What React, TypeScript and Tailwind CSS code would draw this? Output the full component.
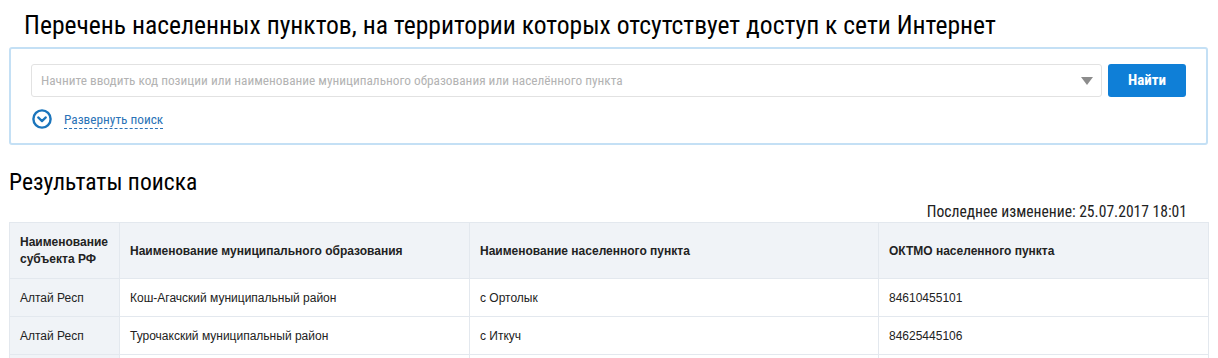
import React from "react";

const narrow = "font-['Roboto_Condensed','Liberation_Sans_Narrow','Arial_Narrow',sans-serif]";
const arial = "font-['Liberation_Sans',Arial,sans-serif]";

const rows = [
  ["Алтай Респ", "Кош-Агачский муниципальный район", "с Ортолык", "84610455101"],
  ["Алтай Респ", "Турочакский муниципальный район", "с Иткуч", "84625445106"],
  ["", "", "", ""],
];

function ExpandIcon() {
  return (
    <svg width="20" height="20" viewBox="0 0 20 20" fill="none">
      <circle cx="10" cy="10" r="8.6" stroke="#1b75bc" strokeWidth="2.4" />
      <path d="M6.2 8.4 10 12.1 13.8 8.4" stroke="#1b75bc" strokeWidth="2.2" strokeLinecap="round" strokeLinejoin="round" />
    </svg>
  );
}

export default function App() {
  return (
    <div className="w-[1218px] h-[358px] overflow-hidden bg-white px-[9px] pr-[10px]">
      <h1 className={`${narrow} pl-[15px] pt-[8px] text-[25.6px] leading-[34px] text-black`}>
        Перечень населенных пунктов, на территории которых отсутствует доступ к сети Интернет
      </h1>

      <section className="mt-[5px] rounded-[3px] border-2 border-[#c4e0f5] px-[20px] pt-[15px] pb-[14px]">
        <div className="flex gap-[6px]">
          <div className="flex h-[33px] flex-1 items-center rounded-[3px] border border-[#e2e2e2] bg-white pl-[9px] pr-[8px]">
            <span className={`${narrow} flex-1 text-[13.3px] text-[#b3b3b3]`}>
              Начните вводить код позиции или наименование муниципального образования или населённого пункта
            </span>
            <span className="h-0 w-0 border-x-[6px] border-t-[8px] border-x-transparent border-t-[#8c8c8c]" />
          </div>
          <button className={`${narrow} h-[33px] w-[78px] rounded-[3px] bg-[#0f7fd7] text-[15px] font-bold text-white`}>
            Найти
          </button>
        </div>
        <div className="mt-[12px] flex items-center gap-[12px] pl-[1px]">
          <ExpandIcon />
          <span className={`${narrow} border-b border-dashed border-[#2b73b7] pt-[2px] text-[13.3px] leading-[17px] text-[#2b73b7]`}>
            Развернуть поиск
          </span>
        </div>
      </section>

      <h2 className={`${narrow} mt-[22px] text-[23.6px] leading-[30px] text-black`}>Результаты поиска</h2>

      <div className={`${narrow} mt-[6px] pr-[21px] text-right text-[15.6px] leading-[19px] text-[#222]`}>
        Последнее изменение: 25.07.2017 18:01
      </div>

      <table className={`${arial} w-[1199px] table-fixed border-collapse text-[12px] text-[#222]`}>
        <colgroup>
          <col className="w-[110px]" />
          <col className="w-[350px]" />
          <col className="w-[409px]" />
          <col className="w-[330px]" />
        </colgroup>
        <thead>
          <tr className="h-[56px] bg-[#f0f3f7]">
            <th className="border border-[#e3e8ee] px-[10px] text-left font-bold leading-[17px]">
              Наименование субъекта РФ
            </th>
            <th className="border border-[#e3e8ee] px-[10px] text-left font-bold">Наименование муниципального образования</th>
            <th className="border border-[#e3e8ee] px-[10px] text-left font-bold">Наименование населенного пункта</th>
            <th className="border border-[#e3e8ee] px-[10px] text-left font-bold">ОКТМО населенного пункта</th>
          </tr>
        </thead>
        <tbody>
          {rows.map((r, i) => (
            <tr key={i} className="h-[38px]">
              <td className="border border-[#e3e8ee] bg-[#f0f3f7] px-[10px]">{r[0]}</td>
              <td className="border border-[#e3e8ee] px-[10px]">{r[1]}</td>
              <td className="border border-[#e3e8ee] px-[10px]">{r[2]}</td>
              <td className="border border-[#e3e8ee] px-[10px]">{r[3]}</td>
            </tr>
          ))}
        </tbody>
      </table>
    </div>
  );
}
